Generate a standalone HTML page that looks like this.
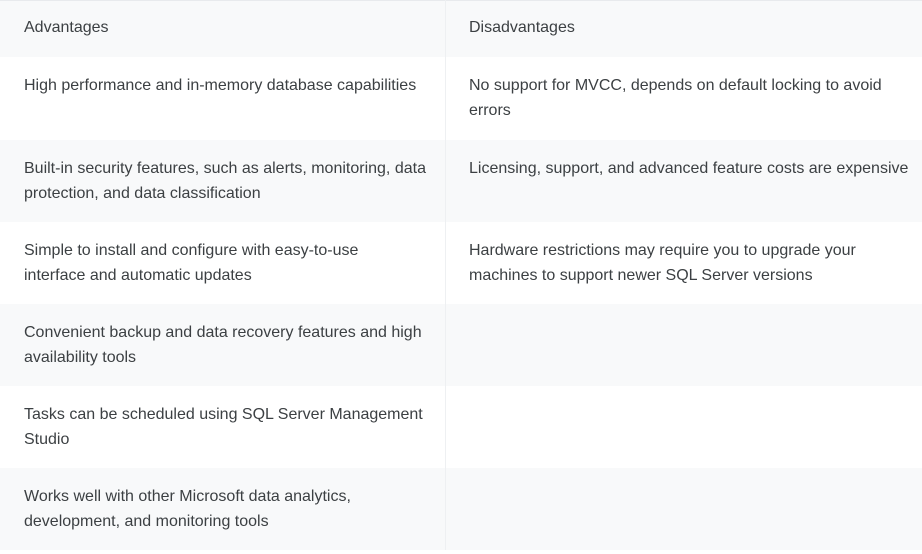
<!DOCTYPE html>
<html><head><style>
body{margin:0;background:#fff;width:922px;height:554px;overflow:hidden;font-family:"Liberation Sans",sans-serif;color:#3c4043;font-size:16px;}
.r{position:absolute;left:0;width:922px;}
.g{background:#f8f9fa;}
.c{position:absolute;top:16px;line-height:25px;}
.a{left:24px;width:400px;}
.d{left:469px;width:430px;}
.v{position:absolute;left:445px;top:0;width:1px;height:550px;background:#eef0f2;}
</style></head><body>
<div class="r" style="top:0;height:1px;background:#e8eaed"></div>
<div class="r g" style="top:1px;height:56px"><div class="c a" style="top:14px">Advantages</div><div class="c d" style="top:14px">Disadvantages</div></div>
<div class="r" style="top:57px;height:83px"><div class="c a">High performance and in-memory database capabilities</div><div class="c d" style="width:415px">No support for MVCC, depends on default locking to avoid errors</div></div>
<div class="r g" style="top:140px;height:82px"><div class="c a" style="width:412px">Built-in security features, such as alerts, monitoring, data protection, and data classification</div><div class="c d" style="width:450px">Licensing, support, and advanced feature costs are expensive</div></div>
<div class="r" style="top:222px;height:82px"><div class="c a">Simple to install and configure with easy-to-use interface and automatic updates</div><div class="c d">Hardware restrictions may require you to upgrade your machines to support newer SQL Server versions</div></div>
<div class="r g" style="top:304px;height:82px"><div class="c a">Convenient backup and data recovery features and high availability tools</div></div>
<div class="r" style="top:386px;height:82px"><div class="c a">Tasks can be scheduled using SQL Server Management Studio</div></div>
<div class="r g" style="top:468px;height:82px"><div class="c a">Works well with other Microsoft data analytics, development, and monitoring tools</div></div>
<div class="v"></div>
</body></html>
